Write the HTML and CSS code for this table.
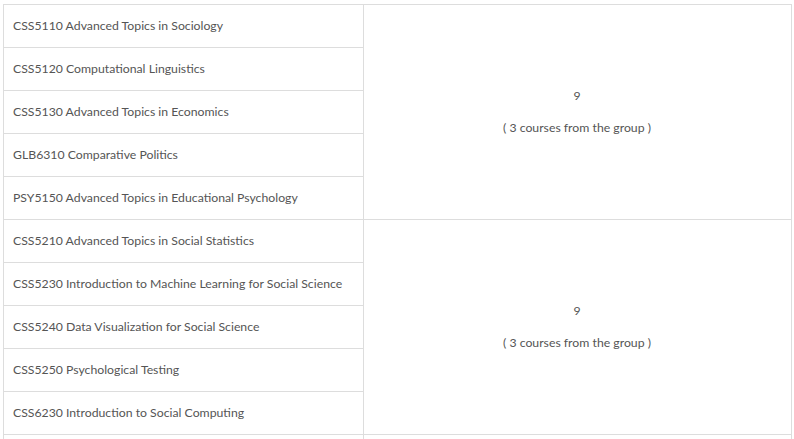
FILE: index.html
```html
<!DOCTYPE html>
<html>
<head>
<meta charset="utf-8">
<link rel="stylesheet" href="styles.css">
</head>
<body>
<table class="grid">
  <tbody>
    <tr><td class="course">CSS5110 Advanced Topics in Sociology</td><td class="credits" rowspan="5"><div class="credit-box"><span>9</span><span>( 3 courses from the group )</span></div></td></tr>
    <tr><td class="course">CSS5120 Computational Linguistics</td></tr>
    <tr><td class="course">CSS5130 Advanced Topics in Economics</td></tr>
    <tr><td class="course">GLB6310 Comparative Politics</td></tr>
    <tr><td class="course">PSY5150 Advanced Topics in Educational Psychology</td></tr>
    <tr><td class="course">CSS5210 Advanced Topics in Social Statistics</td><td class="credits" rowspan="5"><div class="credit-box"><span>9</span><span>( 3 courses from the group )</span></div></td></tr>
    <tr><td class="course">CSS5230 Introduction to Machine Learning for Social Science</td></tr>
    <tr><td class="course">CSS5240 Data Visualization for Social Science</td></tr>
    <tr><td class="course">CSS5250 Psychological Testing</td></tr>
    <tr><td class="course">CSS6230 Introduction to Social Computing</td></tr>
    <tr><td class="course">&nbsp;</td><td class="credits">&nbsp;</td></tr>
  </tbody>
</table>
</body>
</html>
```
FILE: styles.css
```css
html, body {
  margin: 0;
  padding: 0;
  background: #fff;
  overflow: hidden;
}
body {
  padding: 4px 0 0 3px;
  font-family: "Lato", "Open Sans", sans-serif;
  font-size: 12.25px;
  color: #555;
}
.grid {
  border-collapse: collapse;
  width: 789px;
  table-layout: fixed;
}
.grid td {
  border: 1px solid #ddd;
  height: 42px;
  padding: 0 10px 1px 9px;
  box-sizing: border-box;
  line-height: 16px;
}
.grid td.course {
  width: 360px;
  height: 43px;
}
.grid td.credits {
  text-align: center;
  vertical-align: middle;
  padding-bottom: 0;
}
.credit-box {
  display: flex;
  flex-direction: column;
  align-items: center;
  gap: 16px;
}
```
